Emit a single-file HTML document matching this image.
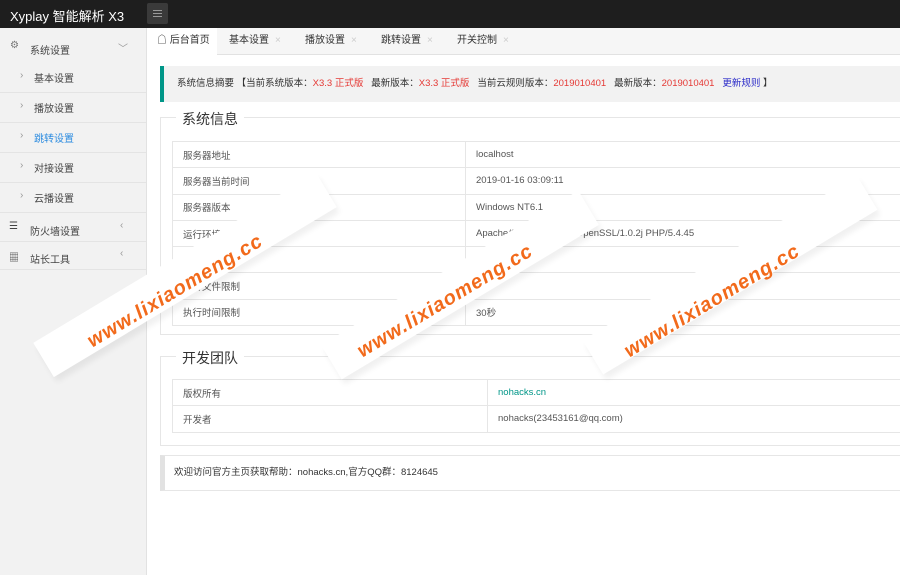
<!DOCTYPE html>
<html><head><meta charset="utf-8"><style>
*{margin:0;padding:0;box-sizing:border-box}
body{width:900px;height:575px;overflow:hidden;position:relative;background:#fff;font-family:"Liberation Sans","Noto Sans CJK SC",sans-serif;font-size:10px;color:#555}
.hdr{position:absolute;left:0;top:0;width:900px;height:28px;background:#1e1e1e}
.logo{position:absolute;left:10px;top:6px;color:#fff;font-size:13px}
.mb{position:absolute;left:147px;top:3px;width:21px;height:21px;background:#3a3a3a;border-radius:2px}
.mb i{position:absolute;left:6px;width:9px;height:1px;background:#999}
.side{position:absolute;left:0;top:28px;width:147px;height:547px;background:#f2f2f2;border-right:1px solid #e2e2e2}
.si{position:absolute;left:0;width:146px;height:30px;border-bottom:1px solid #e4e4e4;font-size:10px;color:#444}
.si span{position:absolute;top:7px}
.tabs{position:absolute;left:147px;top:28px;width:753px;height:27px;border-bottom:1px solid #e2e2e2;background:#f6f6f6}
.tab{position:absolute;top:0;height:27px;line-height:26px;font-size:10px;color:#333}
.tab b{font-weight:normal;color:#ccc;margin-left:6px}
.note{position:absolute;left:160px;top:66px;width:740px;height:36px;background:#f2f2f2;border-left:4px solid #009688;line-height:36px;padding-left:13px;font-size:9.5px;color:#333;white-space:nowrap}
.r{color:#e53935}.bl{color:#2b2bc8}
.fs{position:absolute;left:160px;border:1px solid #e6e6e6;border-right:none;width:745px}
.fs h3{position:absolute;left:15px;top:-9px;background:#fff;padding:0 6px;font-size:14px;font-weight:normal;color:#333}
table{position:absolute;border-collapse:collapse;font-size:9.5px;color:#555}
td{border:1px solid #e6e6e6;height:26.3px;padding-left:10px}
.wm{position:absolute;transform:rotate(-31deg);transform-origin:center;background:#fff;height:40px;box-shadow:0 6px 6px rgba(0,0,0,.06)}
.wt{position:absolute;transform:rotate(-31deg);color:#f26a1b;font-weight:bold;font-style:italic;font-size:20px;white-space:nowrap;letter-spacing:1px}
</style></head><body>
<div class="hdr"><div class="logo">Xyplay 智能解析 X3</div><div class="mb"><i style="top:7px"></i><i style="top:10px"></i><i style="top:13px"></i></div></div>
<div class="side">
<div class="si" style="top:5px;height:31px;border:none"><span style="left:10px;color:#777">⚙</span><span style="left:30px;top:9px">系统设置</span><span style="left:118px;color:#999">﹀</span></div>
<div class="si" style="top:35px"><span style="left:20px;color:#999">›</span><span style="left:34px">基本设置</span></div>
<div class="si" style="top:65px"><span style="left:20px;color:#999">›</span><span style="left:34px">播放设置</span></div>
<div class="si" style="top:95px"><span style="left:20px;color:#999">›</span><span style="left:34px;color:#2d8ce0">跳转设置</span></div>
<div class="si" style="top:125px"><span style="left:20px;color:#999">›</span><span style="left:34px">对接设置</span></div>
<div class="si" style="top:155px;height:30px"><span style="left:20px;color:#999">›</span><span style="left:34px">云播设置</span></div>
<div class="si" style="top:186px;height:28px"><span style="left:9px;top:7px">☰</span><span style="left:30px;top:9px">防火墙设置</span><span style="left:120px;top:6px;color:#999">‹</span></div>
<div class="si" style="top:214px;height:28px"><span style="left:9px;top:7px">▦</span><span style="left:30px;top:9px">站长工具</span><span style="left:120px;top:6px;color:#999">‹</span></div>
</div>
<div class="tabs">
<div class="tab" style="left:0;width:70px;background:#fff;padding-left:10px;height:28px">☖ 后台首页</div>
<div class="tab" style="left:82px">基本设置<b>×</b></div>
<div class="tab" style="left:158px">播放设置<b>×</b></div>
<div class="tab" style="left:234px">跳转设置<b>×</b></div>
<div class="tab" style="left:310px">开关控制<b>×</b></div>
</div>
<div class="note">系统信息摘要 【当前系统版本：<span class="r">X3.3 正式版</span>&nbsp;&nbsp; 最新版本：<span class="r">X3.3 正式版</span>&nbsp;&nbsp; 当前云规则版本：<span class="r">2019010401</span>&nbsp;&nbsp; 最新版本：<span class="r">2019010401</span>&nbsp;&nbsp; <span class="bl">更新规则</span> 】</div>
<div class="fs" style="top:117px;height:218px"><h3>系统信息</h3></div>
<table style="left:172px;top:141px;width:740px">
<tr><td style="width:293px">服务器地址</td><td>localhost</td></tr>
<tr><td>服务器当前时间</td><td>2019-01-16 03:09:11</td></tr>
<tr><td>服务器版本</td><td>Windows NT6.1</td></tr>
<tr><td>运行环境</td><td>Apache/2.4.23 (Win32) OpenSSL/1.0.2j PHP/5.4.45</td></tr>
<tr><td></td><td></td></tr>
<tr><td>上传文件限制</td><td></td></tr>
<tr><td>执行时间限制</td><td>30秒</td></tr>
</table>
<div class="fs" style="top:356px;height:90px"><h3>开发团队</h3></div>
<table style="left:172px;top:379px;width:740px">
<tr><td style="width:315px">版权所有</td><td style="color:#009688">nohacks.cn</td></tr>
<tr><td>开发者</td><td>nohacks(23453161@qq.com)</td></tr>
</table>
<div style="position:absolute;left:160px;top:455px;width:745px;height:36px;border:1px solid #e6e6e6;border-left:5px solid #e2e2e2;line-height:34px;padding-left:9px;font-size:9.5px;color:#333">欢迎访问官方主页获取帮助：nohacks.cn,官方QQ群：8124645</div>

<div class="wm" style="left:20px;top:255px;width:330px"></div>
<div class="wm" style="left:310px;top:265px;width:300px"></div>
<div class="wm" style="left:570px;top:255px;width:320px"></div>
<div class="wt" style="left:75px;top:280px">www.lixiaomeng.cc</div>
<div class="wt" style="left:345px;top:290px">www.lixiaomeng.cc</div>
<div class="wt" style="left:612px;top:290px">www.lixiaomeng.cc</div>
</body></html>
